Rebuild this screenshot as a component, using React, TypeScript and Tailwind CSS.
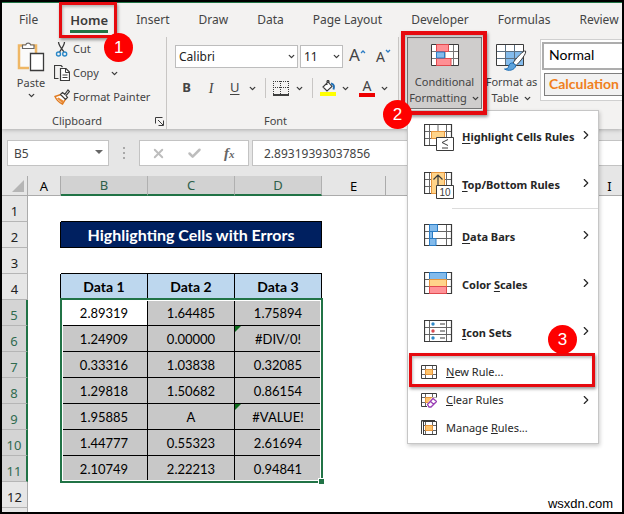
import React from "react";
import { ChevronDown, ChevronRight, Check, X } from "lucide-react";

const INK = "#3b3b3b";

function Badge({ n, className }: { n: number; className: string }) {
  return (
    <span
      className={`absolute z-30 flex size-[29px] items-center justify-center rounded-full bg-[#fe0000] font-['Liberation_Sans',sans-serif] text-[17px] text-white ${className}`}
    >
      {n}
    </span>
  );
}

function Highlight({ className }: { className: string }) {
  return (
    <span
      className={`pointer-events-none absolute z-20 border-[#e60a0f] shadow-[1px_2px_3px_rgba(0,0,0,0.4),inset_1px_2px_3px_rgba(0,0,0,0.25)] ${className}`}
    />
  );
}

function Caret() {
  return <ChevronDown size={9} strokeWidth={3.5} color={INK} aria-hidden />;
}

function Divider() {
  return <span className="h-5 w-px bg-[#c8c6c4]" />;
}

function PasteIcon() {
  return (
    <svg width="28" height="31" viewBox="0 0 28 31" fill="none" aria-hidden>
      <path d="M2 4.500h17V27H2z" fill="#fafafa" stroke="#efb765" strokeWidth="2.500" />
      <path d="M5.500 7.500V4h3.200a2.600 2.600 0 0 1 5 0H17v3.500z" fill="#fff" stroke="#666" strokeWidth="1.200" />
      <path d="M12 11h4v18h-4z" fill="#f3f2f1" />
      <path d="M13.500 12.500h13v17h-13z" fill="#fff" stroke={INK} strokeWidth="1.300" />
    </svg>
  );
}

function CutIcon() {
  return (
    <svg width="16" height="16" viewBox="0 0 16 16" fill="none" aria-hidden>
      <path d="M4.500 1c0 3 2 5.500 5.500 10M10.500 1c0 3-2 5.500-5 10" stroke={INK} strokeWidth="1.300" />
      <circle cx="4.500" cy="13" r="2" stroke="#2b88c8" strokeWidth="1.400" />
      <circle cx="10.700" cy="13" r="2" stroke="#2b88c8" strokeWidth="1.400" />
    </svg>
  );
}

function CopyIcon() {
  return (
    <svg width="16" height="16" viewBox="0 0 16 16" fill="none" aria-hidden>
      <path d="M4.500 13.500h-4V.5H7l1.500 1.500" stroke={INK} strokeWidth="1.200" />
      <path d="M6.500 3.500h5.500l3.500 3.500v8.500h-9z" fill="#fff" stroke={INK} strokeWidth="1.200" />
      <path d="M11.500 3.500V7.500h4M8.500 10h5M8.500 12.500h5" stroke={INK} />
    </svg>
  );
}

function BrushIcon() {
  return (
    <svg width="16" height="16" viewBox="0 0 16 16" fill="none" aria-hidden>
      <path d="M7 5.500 1 7.500c1.500 3.500 4 6 7.500 7.500L11.500 10z" fill="#fff" stroke="#e07a1f" strokeWidth="1.400" />
      <path d="M3 9.500l5.500 5L10 12 4.500 8.500z" fill="#e98a35" />
      <path d="M6.500 5.500l2-2 2.300 1.800L14 1l1.500 1.500L12 6.500l1.500 2-2 2z" fill="#fff" stroke={INK} strokeWidth="1.200" />
    </svg>
  );
}

function LaunchIcon() {
  return (
    <svg width="9" height="9" viewBox="0 0 9 9" fill="none" stroke={INK} aria-hidden>
      <path d="M.5 6.500v-6h7M3 3l5 5M8.500 3.500v5h-5" />
    </svg>
  );
}

function BordersIcon() {
  return (
    <svg width="16" height="16" viewBox="0 0 16 16" fill="none" aria-hidden>
      <path d="M.5 1v13M15.500 1v13M7.500 1v13M0 1.500h16M0 7.500h16" stroke={INK} strokeDasharray="1 1" />
      <path d="M0 15h16" stroke="#000" strokeWidth="1.500" />
    </svg>
  );
}

function FillIcon() {
  return (
    <svg width="16" height="16" viewBox="0 0 16 16" fill="none" aria-hidden>
      <path d="M3 7l5-5 4 4.500-5 4.500zM7 5V1.500c0-1.500 2-1.500 2 0V4" fill="#fff" stroke={INK} strokeWidth="1.100" />
      <path d="M11 3.500c3 .5 3.500 3 2.500 6" stroke="#1f6fb5" strokeWidth="2" />
      <path d="M0 12h16v4H0z" fill="#ffff00" />
    </svg>
  );
}

function CondIcon() {
  return (
    <svg width="28" height="22" viewBox="0 0 28 22" fill="none" aria-hidden>
      <path d="M.5.5h27v21H.5z" fill="#fff" />
      <path d="M.5 7.500h27M.5 14.500h27M5.500.5v21M14 .5v21M22.500.5v21" stroke="#777" />
      <path d="M.5.5h27v21H.5z" stroke={INK} />
      <path d="M5.500.5h12v7h-12zM5.500 14.500h14.500v7H5.500z" fill="#ff8f94" stroke="#e04a4f" />
      <path d="M5.500 8h8v6h-8z" fill="#83bbec" stroke="#2b7cc4" />
    </svg>
  );
}

function TableIcon() {
  return (
    <svg width="31" height="27" viewBox="0 0 31 27" fill="none" aria-hidden>
      <path d="M.5.500h27v21H.5z" fill="#fff" />
      <path d="M9.500 7.500h18v14h-18z" fill="#83bbec" />
      <path d="M.5 7.500h27M.5 14.500h27M9.500.5v21M18.500.5v21" stroke="#5a6f82" />
      <path d="M.5.5h27v21H.5z" stroke={INK} />
      <path d="M29.500 7c-2-1-10 8-12.500 12l3 2.500c4-3.500 11-12.500 9.500-14.500z" fill="#fff" stroke={INK} />
      <path d="M17 19c-3-.5-4 1.500-4.500 4-.3 1.500-2 2-4 2 4 2.500 10 1.500 11.500-3.500z" fill="#5da3dc" stroke="#1f6fb5" />
    </svg>
  );
}

function GridBase({ children }: { children?: React.ReactNode }) {
  return (
    <svg width="30" height="27" viewBox="0 0 30 27" fill="none" aria-hidden>
      <path d="M.5.5h27v21H.5z" fill="#fff" />
      <path d="M.5 7.500h27M.5 14.500h27M5.500.5v21M22.500.5v21" stroke="#666" />
      <path d="M.5.5h27v21H.5z" stroke={INK} strokeWidth="1.200" />
      {children}
    </svg>
  );
}

const highlightIcon = (
  <GridBase>
    <path d="M14 .5v7M14 14.500v7" stroke="#666" />
    <path d="M7.500 7.500h13v7h-13z" fill="#ffd48a" stroke="#e8963c" />
    <path d="M12.500 13.500h17v13h-17z" fill="#fff" stroke={INK} />
    <path d="M24 15.500l-6 3 6 3M18 24h6" stroke={INK} />
  </GridBase>
);
const topIcon = (
  <GridBase>
    <path d="M7.500.5h13v21h-13z" fill="#ffd48a" stroke="#e8963c" />
    <path d="M14 14V3M9.500 7.500 14 3l4.500 4.500" stroke={INK} strokeWidth="1.200" />
    <path d="M12.500 13.500h17v13h-17z" fill="#fff" stroke={INK} />
    <text x="15.500" y="24" fontSize="10" fontWeight="400" fill={INK} fontFamily="Liberation Sans, sans-serif">10</text>
  </GridBase>
);
const barsIcon = (
  <GridBase>
    <path d="M5.500.5h8v7h-8zM5.500 7.500h3v7h-3zM5.500 14.500H12v7H5.500z" fill="#83bbec" stroke="#2b7cc4" />
  </GridBase>
);
const scalesIcon = (
  <GridBase>
    <path d="M5.500.5h17v7h-17z" fill="#83bbec" stroke="#2b7cc4" />
    <path d="M5.500 7.500h17v7h-17z" fill="#ffd48a" stroke="#e8963c" />
    <path d="M5.500 14.500h17v7h-17z" fill="#ff9398" stroke="#e04a4f" />
  </GridBase>
);
const setsIcon = (
  <GridBase>
    <circle cx="9" cy="4" r="1.700" fill="#2b88c8" />
    <circle cx="9" cy="11" r="1.700" fill="#d9484e" />
    <circle cx="9" cy="18" r="1.700" fill="#2b88c8" />
    <path d="M16 4h5M16 11h5M16 18h5" stroke={INK} />
  </GridBase>
);

function SmallGrid({ kind }: { kind: "new" | "clear" | "manage" }) {
  return (
    <svg width="16" height="16" viewBox="0 0 16 16" fill="none" aria-hidden>
      <path d="M1 1.500h14v13H1z" fill="#fff" />
      <path d="M0 5.500h16M0 10.500h16M4.500 1.500v13M11.500 1.500v13" stroke="#666" />
      <path d="M.5 1.500h15v13H.5z" stroke={INK} />
      <path d="M4.500 5.500h7v5h-7z" fill="#ffc46b" stroke="#e8963c" />
      {kind === "manage" && <path d="M0 1.500h2V15H0z" fill="#fff" />}
      {kind === "manage" && <path d="M.5 14V.5H14M2.500 2v13" stroke={INK} />}
      {kind === "clear" && (
        <>
          <path d="M6 16V12l5-6.500h5V16z" fill="#fff" />
          <path d="M6.500 12.500 12 6.500l3.500 3-5.500 5.500H8zM9.500 9.500l3.500 3" fill="#fff" stroke="#9a3fb5" strokeWidth="1.300" />
        </>
      )}
    </svg>
  );
}

function GroupLabel({ children }: { children: React.ReactNode }) {
  return <div className="mt-auto pr-3.5 text-center leading-4">{children}</div>;
}

const bigItems = [
  { icon: highlightIcon, pre: "", key: "H", post: "ighlight Cells Rules" },
  { icon: topIcon, pre: "", key: "T", post: "op/Bottom Rules" },
  { icon: barsIcon, pre: "", key: "D", post: "ata Bars" },
  { icon: scalesIcon, pre: "Color ", key: "S", post: "cales" },
  { icon: setsIcon, pre: "", key: "I", post: "con Sets" },
];

function BigItem({ item }: { item: (typeof bigItems)[number] }) {
  return (
    <button role="menuitem" className="flex h-12 w-full items-center pr-[5px] pl-4 font-bold whitespace-nowrap">
      <span className="w-[38px] shrink-0">{item.icon}</span>
      <span className="grow text-left">
        {item.pre}
        <u className="underline-offset-2">{item.key}</u>
        {item.post}
      </span>
      <ChevronRight size={14} strokeWidth={2} className="-mt-1 shrink-0" aria-hidden />
    </button>
  );
}

function Menu() {
  return (
    <div
      role="menu"
      className="absolute top-full left-0 z-10 mt-px w-[192px] border border-[#c6c6c6] bg-white pt-0.5 pb-px text-left text-[11px] text-[#262626] shadow-[1px_2px_4px_rgba(0,0,0,0.2)]"
    >
      {bigItems.slice(0, 2).map((item) => <BigItem key={item.post} item={item} />)}
      <hr className="-mt-px mb-1 ml-11 border-[#dcdcdc]" />
      {bigItems.slice(2).map((item) => <BigItem key={item.post} item={item} />)}
      <div className="relative mt-px">
        <button role="menuitem" className="flex h-7 w-full items-center gap-[9px] pl-[13px]">
          <SmallGrid kind="new" />
          <span><u>N</u>ew Rule...</span>
        </button>
        <Highlight className="-top-[5px] right-[3px] -bottom-px left-px border-[3px]" />
        <Badge n={3} className="-top-[33px] right-[21px]" />
      </div>
      <button role="menuitem" className="flex h-7 w-full items-center gap-[9px] pr-[5px] pl-[13px]">
        <SmallGrid kind="clear" />
        <span className="grow text-left"><u>C</u>lear Rules</span>
        <ChevronRight size={14} strokeWidth={2} aria-hidden />
      </button>
      <button role="menuitem" className="flex h-7 w-full items-center gap-[9px] pl-[13px]">
        <SmallGrid kind="manage" />
        <span>Manage <u>R</u>ules...</span>
      </button>
    </div>
  );
}

function Ribbon() {
  return (
    <header className="relative border-t border-[#217346] bg-[#f3f2f1] text-[11px] text-[#444] shadow-[0_1px_4px_rgba(0,0,0,0.25)]">
      <nav className="flex h-[34px] items-center gap-[29px] pl-[17px] text-[12px] whitespace-nowrap" aria-label="Ribbon tabs">
        <button>File</button>
        <span className="relative mr-[-1px] ml-[3px] w-[38px]">
          <button className="flex w-full justify-center border-b-[3px] border-[#217346] pt-[3px] text-[13px] leading-5 font-semibold text-[#3b3b3b]">
            Home
          </button>
          <Highlight className="-top-[5px] -right-[9px] -bottom-[5px] -left-[11px] border-[3px]" />
          <Badge n={1} className="top-[26px] -right-[25px]" />
        </span>
        <button>Insert</button>
        <button>Draw</button>
        <button>Data</button>
        <button>Page Layout</button>
        <button>Developer</button>
        <button>Formulas</button>
        <button>Review</button>
      </nav>
      <div className="flex h-[92px] whitespace-nowrap">
        <section className="flex w-[165px] shrink-0 flex-col border-r border-[#c8c6c4]" aria-label="Clipboard">
          <div className="flex">
            <button className="ml-3 flex w-[34px] flex-col items-center pt-1">
              <PasteIcon />
              <span className="mt-[3px] leading-4">Paste</span>
              <Caret />
            </button>
            <div className="ml-1.5 flex flex-col">
              <button className="flex h-6 items-center gap-[3px]"><CutIcon /> Cut</button>
              <button className="flex h-6 items-center gap-[3px]">
                <CopyIcon /> Copy <span className="ml-2"><Caret /></span>
              </button>
              <button className="flex h-6 items-center gap-[3px]"><BrushIcon /> Format Painter</button>
            </div>
          </div>
          <div className="relative mt-auto">
            <GroupLabel>Clipboard</GroupLabel>
            <button className="absolute right-0.5 bottom-[3px]" aria-label="Clipboard options"><LaunchIcon /></button>
          </div>
        </section>
        <section className="flex w-[232px] shrink-0 flex-col border-r border-[#c8c6c4]" aria-label="Font">
          <div className="mt-2 flex h-[23px] pl-2">
            <label className="relative">
              <select aria-label="Font name" className="h-full w-[123px] appearance-none border border-[#bdbdbd] bg-white pl-[3px] text-[12px] text-[#222]">
                <option>Calibri</option>
              </select>
              <span className="absolute top-[7px] right-[2px]"><Caret /></span>
            </label>
            <label className="relative ml-0.5">
              <select aria-label="Font size" className="h-full w-[43px] appearance-none border border-[#bdbdbd] bg-white pl-[3px] text-[12px] text-[#222]">
                <option>11</option>
              </select>
              <span className="absolute top-[7px] right-[2px]"><Caret /></span>
            </label>
            <button className="ml-1.5 flex text-[17px] leading-5" aria-label="Increase font size">
              A<svg width="6" height="6" viewBox="0 0 6 6" className="mt-1" fill="none" aria-hidden><path d="M1 4l2-2 2 2" stroke="#2b7cc4" strokeWidth="1.300" /></svg>
            </button>
            <button className="ml-2.5 flex text-[14px] leading-6" aria-label="Decrease font size">
              A<svg width="6" height="6" viewBox="0 0 6 6" className="mt-1" fill="none" aria-hidden><path d="M1 1l2 2 2-2" stroke="#2b7cc4" strokeWidth="1.300" /></svg>
            </button>
          </div>
          <div className="mt-2.5 flex h-5 items-center pl-[15px] text-[13px]">
            <button className="w-[9px] font-bold" aria-label="Bold">B</button>
            <button className="ml-4 w-2 font-['Liberation_Serif',serif] text-[14px] italic" aria-label="Italic">I</button>
            <button className="ml-[15px] w-[9px] underline underline-offset-2" aria-label="Underline">U</button>
            <span className="mr-2 ml-[9px]"><Caret /></span>
            <Divider />
            <button className="mr-1.5 ml-[7px]" aria-label="Borders"><BordersIcon /></button>
            <Caret />
            <span className="w-2" />
            <Divider />
            <button className="mr-[5px] ml-[7px]" aria-label="Fill color"><FillIcon /></button>
            <Caret />
            <button className="mr-[5px] ml-[9px] flex h-[18px] w-4 justify-center border-b-4 border-[#ee0000] text-[14px] leading-[14px]" aria-label="Font color">A</button>
            <Caret />
          </div>
          <GroupLabel>Font</GroupLabel>
        </section>
        <section className="flex grow items-start" aria-label="Styles">
          <div className="relative ml-2 h-[72px] shrink-0">
            <button className="flex h-[72px] w-[75px] flex-col items-center border border-[#767676] bg-[#cfcdcc] pt-1.5">
              <CondIcon />
              <span className="mt-2 leading-4">Conditional</span>
              <span className="flex items-center gap-1 leading-4">Formatting <Caret /></span>
            </button>
            <Menu />
            <Highlight className="-top-[6px] -right-[5px] -bottom-[6px] -left-[6px] border-4" />
            <Badge n={2} className="top-[63px] -left-6" />
          </div>
          <button className="ml-1 flex w-[51px] flex-col items-center pt-[7px]">
            <TableIcon />
            <span className="mt-[3px] leading-4">Format as</span>
            <span className="flex items-center gap-1 leading-4">Table <Caret /></span>
          </button>
          <div className="ml-[3px] mt-0.5 flex h-[62px] min-w-24 grow flex-col gap-[3px] border border-r-0 border-[#d0d0d0] bg-white pt-0.5 pl-px text-left font-['Lato','Liberation_Sans',sans-serif]">
            <button className="h-[28px] border-2 border-r-0 border-[#adadad] bg-white pb-1 pl-[5px] text-left text-[14px] text-black">Normal</button>
            <button className="ml-0.5 h-[23px] border border-r-0 border-[#7f7f7f] bg-[#f2f2f2] pb-1 pl-1 text-left text-[14px] leading-5 font-bold text-[#f08020]">Calculation</button>
          </div>
        </section>
      </div>
    </header>
  );
}

function FormulaBar() {
  return (
    <div className="flex h-[47px] items-start bg-[#e6e6e6] pt-[11px] pl-[5px] text-[12px] text-[#444]">
      <div className="relative shrink-0">
        <input aria-label="Name box" defaultValue="B5" className="h-[26px] w-[102px] border border-[#c3c3c3] bg-white pl-1.5" />
        <span className="absolute top-[10px] right-[6px] border-x-4 border-t-4 border-x-transparent border-t-[#666]" />
      </div>
      <div className="flex h-[26px] w-[30px] shrink-0 flex-col items-center justify-center gap-[3px]">
        <i className="size-0.5 bg-[#a8a8a8]" />
        <i className="size-0.5 bg-[#a8a8a8]" />
        <i className="size-0.5 bg-[#a8a8a8]" />
      </div>
      <div className="flex h-[26px] w-[110px] shrink-0 items-center border border-[#c3c3c3] bg-white pl-[11px]">
        <button aria-label="Cancel"><X size={15} strokeWidth={3} color="#bdbdbd" /></button>
        <button className="ml-[21px]" aria-label="Enter"><Check size={15} strokeWidth={4} color="#bdbdbd" /></button>
        <button className="ml-[22px] font-['Liberation_Serif',serif] text-[15px] font-bold text-[#666] italic" aria-label="Insert function">
          f<span className="text-[11px]">x</span>
        </button>
      </div>
      <input aria-label="Formula" defaultValue="2.89319393037856" className="ml-[3px] h-[26px] min-w-0 grow border border-r-0 border-[#c3c3c3] bg-white pl-[11px]" />
    </div>
  );
}

// F to H lie under the open menu, so their headers carry no letter.
const columns = ["A", "B", "C", "D", "E", "", "", "", "I"];
const selectedColumns = ["B", "C", "D"];
const widths = ["w-[33px]", "w-[87px]", "w-[87px]", "w-[87px]", "w-16", "w-16", "w-16", "w-16", "w-16"];
const data = [
  ["2.89319", "1.64485", "1.75894"],
  ["1.24909", "0.00000", "#DIV/0!"],
  ["0.33316", "1.03838", "0.32085"],
  ["1.29818", "1.50682", "0.86154"],
  ["1.95885", "A", "#VALUE!"],
  ["1.44777", "0.55323", "2.61694"],
  ["2.10749", "2.22213", "0.94841"],
];

function RowHead({ n }: { n: number }) {
  const selected = n >= 5 && n <= 11;
  return (
    <th
      scope="row"
      className={`h-[26px] border-b border-b-[#b5b5b5] p-0 pt-1 text-[13px] leading-5 font-normal ${selected ? "border-r-2 border-r-[#217346] bg-[#d4d4d4] text-[#2f6b4f]" : "border-r border-r-[#ababab] bg-[#e6e6e6] text-[#222]"}`}
    >
      {n}
    </th>
  );
}

function Sheet() {
  return (
    <table className="w-[636px] min-w-full table-fixed border-separate border-spacing-0 bg-white text-center text-black">
      <colgroup>
        <col className="w-[26px]" />
        {widths.map((w, i) => <col key={i} className={w} />)}
      </colgroup>
      <thead>
        <tr className="bg-[#e6e6e6] text-[13px]">
          <th aria-label="Select all" className="h-5 border-r border-b border-[#ababab] p-0">
            <span className="ml-auto mr-[3px] block size-0 border-b-[12px] border-l-[12px] border-b-[#b5b5b5] border-l-transparent" />
          </th>
          {columns.map((c, i) => (
            <th
              key={i}
              scope="col"
              className={`h-5 border-r p-0 leading-4 font-normal ${selectedColumns.includes(c) ? "border-b-2 border-r-[#b0b0b0] border-b-[#217346] bg-[#d2d2d2] text-[#2f5f4a]" : "border-b border-[#ababab]"}`}
            >
              {c}
            </th>
          ))}
        </tr>
      </thead>
      <tbody>
        <tr>
          <RowHead n={1} />
          <td />
          <td colSpan={3} className="border-b border-black" />
        </tr>
        <tr>
          <RowHead n={2} />
          <td className="border-r border-black" />
          <td colSpan={3} className="border-r border-b border-black bg-[#002060] p-0 text-[16px] leading-5 font-bold text-white font-['Lato','Liberation_Sans',sans-serif]">
            Highlighting Cells with Errors
          </td>
        </tr>
        <tr>
          <RowHead n={3} />
          <td />
          <td colSpan={3} className="border-b border-black" />
        </tr>
        <tr>
          <RowHead n={4} />
          <td className="border-r border-black" />
          {[1, 2, 3].map((n) => (
            <td key={n} className="border-r border-b border-black bg-[#bdd7ee] p-0 text-[14px] leading-5 font-bold font-['Lato','Liberation_Sans',sans-serif]">
              Data {n}
            </td>
          ))}
        </tr>
        {data.map((row, r) => (
          <tr key={r}>
            <RowHead n={r + 5} />
            <td className="border-r border-black" />
            {row.map((value, c) => (
              <td
                key={c}
                className={`relative border-r border-b border-black p-0 text-[13px] leading-5 font-['Lato','Liberation_Sans',sans-serif] ${r === 0 && c === 0 ? "bg-white" : "bg-[#c8c8c8]"}`}
              >
                {value}
                {value.startsWith("#") && (
                  <span className="absolute top-0 left-0 border-t-[6px] border-r-[6px] border-t-[#0b6b1b] border-r-transparent" />
                )}
                {r === 0 && c === 0 && (
                  <span className="pointer-events-none absolute -top-0.5 -left-px z-1 h-[185px] w-[263px] border-2 border-[#217346] shadow-[inset_0_0_0_1px_white]">
                    <span className="absolute -right-[3px] -bottom-[3px] size-[6px] border-t border-l border-white bg-[#217346]" />
                  </span>
                )}
              </td>
            ))}
          </tr>
        ))}
        <tr><RowHead n={12} /></tr>
        <tr><th aria-label="Row 13" className="h-[26px] border-r border-r-[#ababab] bg-[#e6e6e6]" /></tr>
      </tbody>
    </table>
  );
}

export default function App() {
  return (
    <div className="relative flex h-screen flex-col overflow-hidden border-2 border-black bg-white font-['Noto_Sans','Liberation_Sans',sans-serif]">
      <div className="relative z-10 shrink-0"><Ribbon /></div>
      <div className="shrink-0"><FormulaBar /></div>
      <main className="min-h-0 grow overflow-hidden"><Sheet /></main>
      <footer className="absolute right-[9px] bottom-0 font-['Liberation_Sans',sans-serif] text-[13px] leading-4 text-black">wsxdn.com</footer>
    </div>
  );
}
